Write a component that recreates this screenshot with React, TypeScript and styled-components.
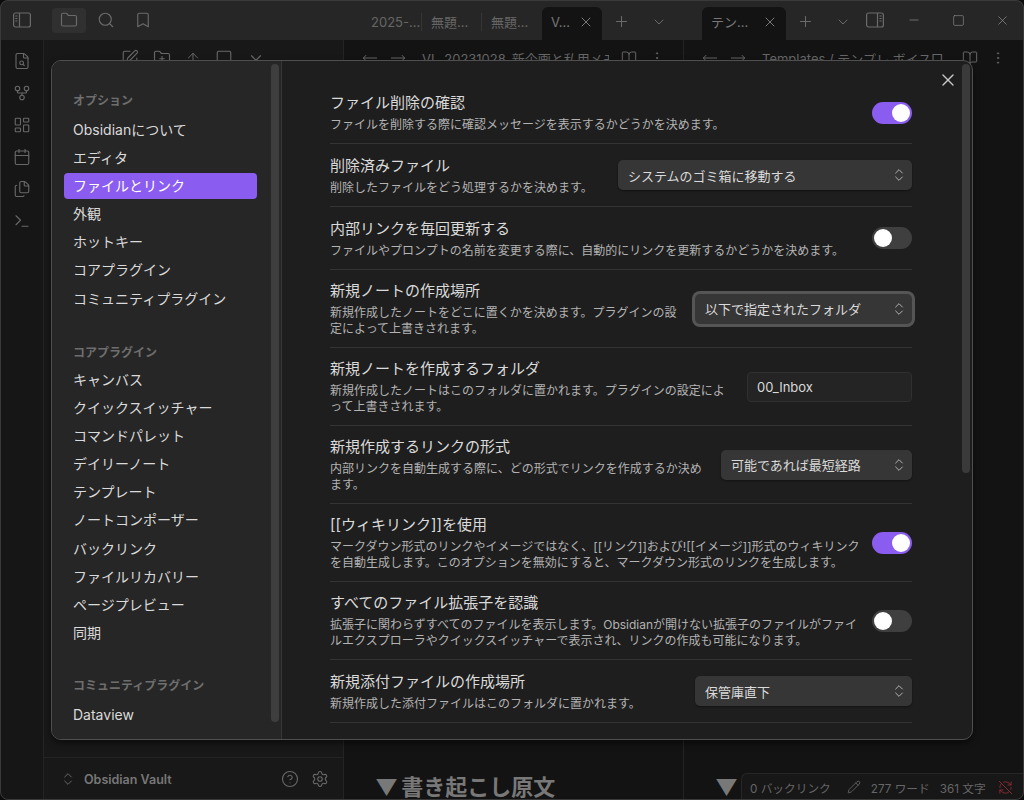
import styled, { createGlobalStyle } from "styled-components";
import {
    ArrowUp,
    Bookmark,
    BookOpen,
    Calendar,
    ChevronDown,
    ChevronsUpDown,
    CircleHelp,
    FileSearch,
    Files,
    Folder,
    FolderPlus,
    GitFork,
    LayoutDashboard,
    Minus,
    MoreVertical,
    MoveLeft,
    MoveRight,
    Pencil,
    Plus,
    RefreshCwOff,
    Search,
    Settings,
    Square,
    SquarePen,
    Terminal,
    X,
} from "lucide-react";

const GlobalStyle = createGlobalStyle`
    html, body {
        margin: 0;
        padding: 0;
        background: #0c0c0c;
    }
    * {
        box-sizing: border-box;
    }
    body {
        font-family: Inter, "Noto Sans CJK JP", sans-serif;
    }
`;

// background app
const Shell = styled.div`
    position: relative;
    width: 1024px;
    height: 800px;
    display: flex;
    flex-direction: column;
    overflow: hidden;
    background: #131313;
    &::after {
        content: "";
        position: absolute;
        inset: 0;
        border: 1px solid #3a3a3a;
        border-radius: 8px;
        box-shadow: 0 0 0 4px #0c0c0c;
        pointer-events: none;
    }
`;
const TitleBar = styled.div`
    height: 40px;
    flex: none;
    display: flex;
    background: #262626;
    color: #6b6b6b;
`;
const TitleLeft = styled.div`
    width: 344px;
    display: flex;
    align-items: center;
    padding-left: 5px;
    gap: 3px;
`;
const TitleCenter = styled.div`
    width: 340px;
    display: flex;
    align-items: flex-end;
    padding-left: 18px;
`;
const TitleRight = styled.div`
    flex: 1;
    display: flex;
    align-items: flex-end;
    padding-left: 18px;
`;
const HeadButton = styled.div<{ $active?: boolean }>`
    width: 34px;
    height: 25px;
    display: flex;
    align-items: center;
    justify-content: center;
    border-radius: 4px;
    background: ${(p) => (p.$active ? "#303030" : "transparent")};
    margin-left: ${(p) => (p.$active ? "10px" : "0")};
`;
const Tab = styled.div<{ $divider?: boolean }>`
    width: 60px;
    height: 33px;
    display: flex;
    align-items: center;
    padding: 0 0 4px 9px;
    font-size: 13px;
    color: #666;
    position: relative;
    ${(p) =>
        p.$divider &&
        `&::after {
            content: "";
            position: absolute;
            right: 0;
            top: 6px;
            height: 18px;
            width: 1px;
            background: #363636;
        }`}
`;
const ActiveTab = styled.div<{ $wide?: boolean }>`
    width: ${(p) => (p.$wide ? "84px" : "60px")};
    height: 33px;
    display: flex;
    align-items: center;
    justify-content: space-between;
    padding: 0 8px 4px 9px;
    font-size: 13px;
    color: #787878;
    background: #131313;
    border-radius: 6px 6px 0 0;
`;
const TabTool = styled.div`
    width: 38px;
    height: 33px;
    display: flex;
    align-items: center;
    justify-content: center;
    padding-bottom: 4px;
`;
const WindowButton = styled.div`
    width: 44px;
    height: 40px;
    display: flex;
    align-items: center;
    justify-content: center;
    color: #8c8c8c;
`;
const SideToggle = styled.div`
    width: 26px;
    height: 33px;
    margin-right: 4px;
    display: flex;
    align-items: center;
    justify-content: center;
    padding-bottom: 8px;
`;
const Body = styled.div`
    flex: 1;
    min-height: 0;
    display: flex;
`;
const Ribbon = styled.div`
    width: 44px;
    flex: none;
    background: #161616;
    border-right: 1px solid #242424;
    color: #686868;
    display: flex;
    flex-direction: column;
    align-items: center;
    padding-top: 11px;
    gap: 12px;
`;
const RibbonIcon = styled.div`
    width: 20px;
    height: 20px;
    display: flex;
    align-items: center;
    justify-content: center;
`;
const LeftPane = styled.div`
    width: 300px;
    flex: none;
    display: flex;
    flex-direction: column;
    background: #181818;
    border-right: 1px solid #242424;
    color: #686868;
`;
const LeftTools = styled.div`
    height: 36px;
    display: flex;
    align-items: center;
    gap: 14px;
    padding-left: 77px;
`;
const VaultRow = styled.div`
    margin-top: auto;
    height: 43px;
    border-top: 1px solid #242424;
    display: flex;
    align-items: center;
    padding: 0 14px 0 16px;
`;
const VaultName = styled.div`
    font-size: 12.5px;
    font-weight: 600;
    color: #777;
    margin-left: 8px;
    flex: 1;
`;
const VaultIcons = styled.div`
    display: flex;
    gap: 12px;
`;
const NotePane = styled.div<{ $last?: boolean }>`
    flex: ${(p) => (p.$last ? "1" : "none")};
    width: ${(p) => (p.$last ? "auto" : "340px")};
    display: flex;
    flex-direction: column;
    color: #666;
    border-right: ${(p) => (p.$last ? "none" : "1px solid #242424")};
    min-width: 0;
`;
const NoteHead = styled.div`
    height: 36px;
    display: flex;
    align-items: center;
    padding: 0 18px;
    gap: 12px;
    font-size: 13px;
    white-space: nowrap;
`;
const NoteCrumb = styled.div`
    flex: 1;
    min-width: 0;
    overflow: hidden;
    margin-left: 4px;
    color: #666;
`;
const NoteHeading = styled.div`
    margin-top: auto;
    padding: 0 0 0 31px;
    font-size: 22px;
    line-height: 26px;
    font-weight: 700;
    word-spacing: -2px;
    color: #787878;
`;
const StatusBar = styled.div`
    position: absolute;
    right: 0;
    bottom: 0;
    width: 283px;
    height: 27px;
    display: flex;
    align-items: center;
    padding: 0 8px;
    gap: 10px;
    font-size: 11.7px;
    color: #666;
    background: #171717;
    border-top: 1px solid #262626;
    border-left: 1px solid #262626;
    border-top-left-radius: 6px;
`;
const StatusText = styled.span<{ $gap?: number }>`
    margin-right: ${(p) => p.$gap ?? 0}px;
`;

// settings modal
const Modal = styled.div`
    position: absolute;
    left: 51px;
    top: 60px;
    width: 922px;
    height: 680px;
    display: flex;
    overflow: hidden;
    background: #1e1e1e;
    border: 1px solid #4f4f4f;
    border-radius: 10px;
    box-shadow: 0 3px 6px rgba(0, 0, 0, 0.5);
`;
const Sidebar = styled.div`
    position: relative;
    width: 230px;
    flex: none;
    background: #262626;
    border-right: 1px solid #363636;
    padding: 28px 24px 0 12px;
`;
const SideScroll = styled.div`
    position: absolute;
    left: 219px;
    top: 3px;
    width: 8px;
    height: 658px;
    border-radius: 4px;
    background: #3e3e3e;
`;
const SideGroup = styled.div<{ $gap: number }>`
    margin-bottom: ${(p) => p.$gap}px;
`;
const SideHeading = styled.div<{ $after?: number }>`
    height: 24px;
    line-height: 24px;
    margin-bottom: ${(p) => p.$after ?? 4}px;
    padding-left: 9px;
    font-size: 12px;
    font-weight: 600;
    color: #6e6e6e;
`;
const SideItem = styled.div<{ $active?: boolean }>`
    height: 26px;
    line-height: 26px;
    margin-bottom: 2.1px;
    padding-left: 9px;
    border-radius: 4px;
    font-size: 14px;
    color: ${(p) => (p.$active ? "#ffffff" : "#dadada")};
    background: ${(p) => (p.$active ? "#8a5cf0" : "transparent")};
`;
const Content = styled.div`
    position: relative;
    flex: 1;
    padding: 21px 60px 0 48px;
    overflow: hidden;
`;
const CloseButton = styled.div`
    position: absolute;
    right: 14px;
    top: 9px;
    color: #c8c8c8;
    display: flex;
`;
const ContentScroll = styled.div`
    position: absolute;
    right: 2px;
    top: 3px;
    width: 8px;
    height: 409px;
    border-radius: 4px;
    background: #3a3a3a;
`;
const RowList = styled.div`
    display: flex;
    flex-direction: column;
`;
const Row = styled.div`
    min-height: 63px;
    display: flex;
    align-items: center;
    justify-content: space-between;
    gap: 12px;
    border-bottom: 1px solid #343434;
    &:first-child {
        min-height: 62px;
    }
    &:last-child {
        border-bottom: none;
    }
`;
const RowInfo = styled.div`
    padding: 9px 0 10px;
`;
const RowTitle = styled.div`
    font-size: 15px;
    line-height: 23px;
    margin-bottom: 3px;
    color: #dadada;
`;
const RowDesc = styled.div`
    font-size: 12px;
    line-height: 16px;
    color: #b3b3b3;
    white-space: pre;
`;
const Toggle = styled.div<{ $on?: boolean }>`
    width: 40px;
    height: 22px;
    flex: none;
    padding: 2px;
    display: flex;
    justify-content: ${(p) => (p.$on ? "flex-end" : "flex-start")};
    border-radius: 11px;
    background: ${(p) => (p.$on ? "#8a5cf0" : "#3f3f3f")};
    &::after {
        content: "";
        width: 18px;
        height: 18px;
        border-radius: 50%;
        background: #fff;
    }
`;
const Select = styled.div<{ $width: number; $focus?: boolean }>`
    width: ${(p) => p.$width}px;
    height: 30px;
    flex: none;
    display: flex;
    align-items: center;
    justify-content: space-between;
    padding: 0 5px 0 10px;
    border-radius: 5px;
    font-size: 13px;
    color: #dadada;
    background: #363636;
    box-shadow: ${(p) =>
        p.$focus ? "0 0 0 3px #555555" : "0 1px 2px rgba(0, 0, 0, 0.4)"};
`;
const TextInput = styled.div`
    width: 165px;
    height: 30px;
    flex: none;
    display: flex;
    align-items: center;
    padding: 0 9px;
    border: 1px solid #303030;
    border-radius: 4px;
    background: #242424;
    font-size: 13px;
    color: #dadada;
`;

const options = [
    "Obsidianについて",
    "エディタ",
    "ファイルとリンク",
    "外観",
    "ホットキー",
    "コアプラグイン",
    "コミュニティプラグイン",
];
const corePlugins = [
    "キャンバス",
    "クイックスイッチャー",
    "コマンドパレット",
    "デイリーノート",
    "テンプレート",
    "ノートコンポーザー",
    "バックリンク",
    "ファイルリカバリー",
    "ページプレビュー",
    "同期",
];

type Setting = {
    title: string;
    desc: string;
    toggle?: boolean;
    select?: string;
    width?: number;
    focus?: boolean;
    input?: string;
};

const settings: Setting[] = [
    {
        title: "ファイル削除の確認",
        desc: "ファイルを削除する際に確認メッセージを表示するかどうかを決めます。",
        toggle: true,
    },
    {
        title: "削除済みファイル",
        desc: "削除したファイルをどう処理するかを決めます。",
        select: "システムのゴミ箱に移動する",
        width: 294,
    },
    {
        title: "内部リンクを毎回更新する",
        desc: "ファイルやプロンプトの名前を変更する際に、自動的にリンクを更新するかどうかを決めます。",
        toggle: false,
    },
    {
        title: "新規ノートの作成場所",
        desc: "新規作成したノートをどこに置くかを決めます。プラグインの設\n定によって上書きされます。",
        select: "以下で指定されたフォルダ",
        width: 217,
        focus: true,
    },
    {
        title: "新規ノートを作成するフォルダ",
        desc: "新規作成したノートはこのフォルダに置かれます。プラグインの設定によ\nって上書きされます。",
        input: "00_Inbox",
    },
    {
        title: "新規作成するリンクの形式",
        desc: "内部リンクを自動生成する際に、どの形式でリンクを作成するか決め\nます。",
        select: "可能であれば最短経路",
        width: 191,
    },
    {
        title: "[[ウィキリンク]]を使用",
        desc: "マークダウン形式のリンクやイメージではなく、[[リンク]]および![[イメージ]]形式のウィキリンク\nを自動生成します。このオプションを無効にすると、マークダウン形式のリンクを生成します。",
        toggle: true,
    },
    {
        title: "すべてのファイル拡張子を認識",
        desc: "拡張子に関わらずすべてのファイルを表示します。Obsidianが開けない拡張子のファイルがファイ\nルエクスプローラやクイックスイッチャーで表示され、リンクの作成も可能になります。",
        toggle: false,
    },
    {
        title: "新規添付ファイルの作成場所",
        desc: "新規作成した添付ファイルはこのフォルダに置かれます。",
        select: "保管庫直下",
        width: 217,
    },
    {
        title: "添付ファイル",
        desc: "",
    },
];

function SidebarToggleIcon({ right }: { right?: boolean }) {
    return (
        <svg width="18" height="16" viewBox="0 0 18 16" fill="none" stroke="currentColor" strokeWidth="1.2">
            <rect x="0.6" y="1" width="16.8" height="14" rx="2" />
            <path d={right ? "M11.5 1v14" : "M6.5 1v14"} />
            {right ? (
                <path d="M13.5 4h2.2M13.5 6.5h2.2M13.5 9h2.2" />
            ) : (
                <path d="M2.3 4h2.2M2.3 6.5h2.2M2.3 9h2.2" />
            )}
        </svg>
    );
}

function SettingRow({ item }: { item: Setting }) {
    return (
        <Row>
            <RowInfo>
                <RowTitle>{item.title}</RowTitle>
                <RowDesc>{item.desc}</RowDesc>
            </RowInfo>
            {item.toggle !== undefined && <Toggle $on={item.toggle} />}
            {item.select && (
                <Select $width={item.width!} $focus={item.focus}>
                    {item.select}
                    <ChevronsUpDown size={16} strokeWidth={1.5} color="#b3b3b3" />
                </Select>
            )}
            {item.input && <TextInput>{item.input}</TextInput>}
        </Row>
    );
}

export default function App() {
    return (
        <Shell>
            <GlobalStyle />
            <TitleBar>
                <TitleLeft>
                    <HeadButton>
                        <SidebarToggleIcon />
                    </HeadButton>
                    <HeadButton $active>
                        <Folder size={18} strokeWidth={1.5} />
                    </HeadButton>
                    <HeadButton>
                        <Search size={18} strokeWidth={1.5} />
                    </HeadButton>
                    <HeadButton>
                        <Bookmark size={18} strokeWidth={1.5} />
                    </HeadButton>
                </TitleLeft>
                <TitleCenter>
                    <Tab $divider>2025-...</Tab>
                    <Tab $divider>無題...</Tab>
                    <Tab>無題...</Tab>
                    <ActiveTab>
                        V...
                        <X size={16} strokeWidth={1.5} />
                    </ActiveTab>
                    <TabTool>
                        <Plus size={17} strokeWidth={1.5} />
                    </TabTool>
                    <TabTool>
                        <ChevronDown size={16} strokeWidth={1.5} />
                    </TabTool>
                </TitleCenter>
                <TitleRight>
                    <ActiveTab $wide>
                        テン...
                        <X size={16} strokeWidth={1.5} />
                    </ActiveTab>
                    <TabTool>
                        <Plus size={17} strokeWidth={1.5} />
                    </TabTool>
                    <TabTool>
                        <ChevronDown size={16} strokeWidth={1.5} />
                    </TabTool>
                    <SideToggle>
                        <SidebarToggleIcon right />
                    </SideToggle>
                    <WindowButton>
                        <Minus size={14} strokeWidth={1.2} />
                    </WindowButton>
                    <WindowButton>
                        <Square size={13} strokeWidth={1.2} />
                    </WindowButton>
                    <WindowButton>
                        <X size={15} strokeWidth={1.2} />
                    </WindowButton>
                </TitleRight>
            </TitleBar>
            <Body>
                <Ribbon>
                    {[FileSearch, GitFork, LayoutDashboard, Calendar, Files, Terminal].map((Icon, i) => (
                        <RibbonIcon key={i}>
                            <Icon size={18} strokeWidth={1.5} />
                        </RibbonIcon>
                    ))}
                </Ribbon>
                <LeftPane>
                    <LeftTools>
                        <SquarePen size={18} strokeWidth={1.5} />
                        <FolderPlus size={18} strokeWidth={1.5} />
                        <ArrowUp size={16} strokeWidth={1.5} />
                        <Square size={18} strokeWidth={1.5} />
                        <ChevronDown size={18} strokeWidth={1.5} />
                    </LeftTools>
                    <VaultRow>
                        <ChevronsUpDown size={16} strokeWidth={1.5} />
                        <VaultName>Obsidian Vault</VaultName>
                        <VaultIcons>
                            <CircleHelp size={18} strokeWidth={1.5} />
                            <Settings size={18} strokeWidth={1.5} />
                        </VaultIcons>
                    </VaultRow>
                </LeftPane>
                <NotePane>
                    <NoteHead>
                        <MoveLeft size={16} strokeWidth={1.5} />
                        <MoveRight size={16} strokeWidth={1.5} />
                        <NoteCrumb>VL_20231028_新企画と私用メモ</NoteCrumb>
                        <BookOpen size={16} strokeWidth={1.5} />
                        <MoreVertical size={16} strokeWidth={1.5} />
                    </NoteHead>
                    <NoteHeading>▼ 書き起こし原文</NoteHeading>
                </NotePane>
                <NotePane $last>
                    <NoteHead>
                        <MoveLeft size={16} strokeWidth={1.5} />
                        <MoveRight size={16} strokeWidth={1.5} />
                        <NoteCrumb>Templates / テンプレ ボイス□</NoteCrumb>
                        <BookOpen size={16} strokeWidth={1.5} />
                        <MoreVertical size={16} strokeWidth={1.5} />
                    </NoteHead>
                    <NoteHeading>▼</NoteHeading>
                </NotePane>
            </Body>
            <StatusBar>
                <StatusText $gap={6}>0 バックリンク</StatusText>
                <Pencil size={14} strokeWidth={1.5} />
                <StatusText>277 ワード</StatusText>
                <StatusText $gap={2}>361 文字</StatusText>
                <RefreshCwOff size={15} strokeWidth={1.5} color="#8f2a35" />
            </StatusBar>
            <Modal>
                <Sidebar>
                    <SideScroll />
                    <SideGroup $gap={29}>
                        <SideHeading>オプション</SideHeading>
                        {options.map((name, i) => (
                            <SideItem key={name} $active={i === 2}>
                                {name}
                            </SideItem>
                        ))}
                    </SideGroup>
                    <SideGroup $gap={28.5}>
                        <SideHeading $after={2.4}>コアプラグイン</SideHeading>
                        {corePlugins.map((name) => (
                            <SideItem key={name}>{name}</SideItem>
                        ))}
                    </SideGroup>
                    <SideGroup $gap={0}>
                        <SideHeading>コミュニティプラグイン</SideHeading>
                        <SideItem>Dataview</SideItem>
                    </SideGroup>
                </Sidebar>
                <Content>
                    <CloseButton>
                        <X size={20} strokeWidth={1.6} />
                    </CloseButton>
                    <ContentScroll />
                    <RowList>
                        {settings.map((item) => (
                            <SettingRow key={item.title} item={item} />
                        ))}
                    </RowList>
                </Content>
            </Modal>
        </Shell>
    );
}
